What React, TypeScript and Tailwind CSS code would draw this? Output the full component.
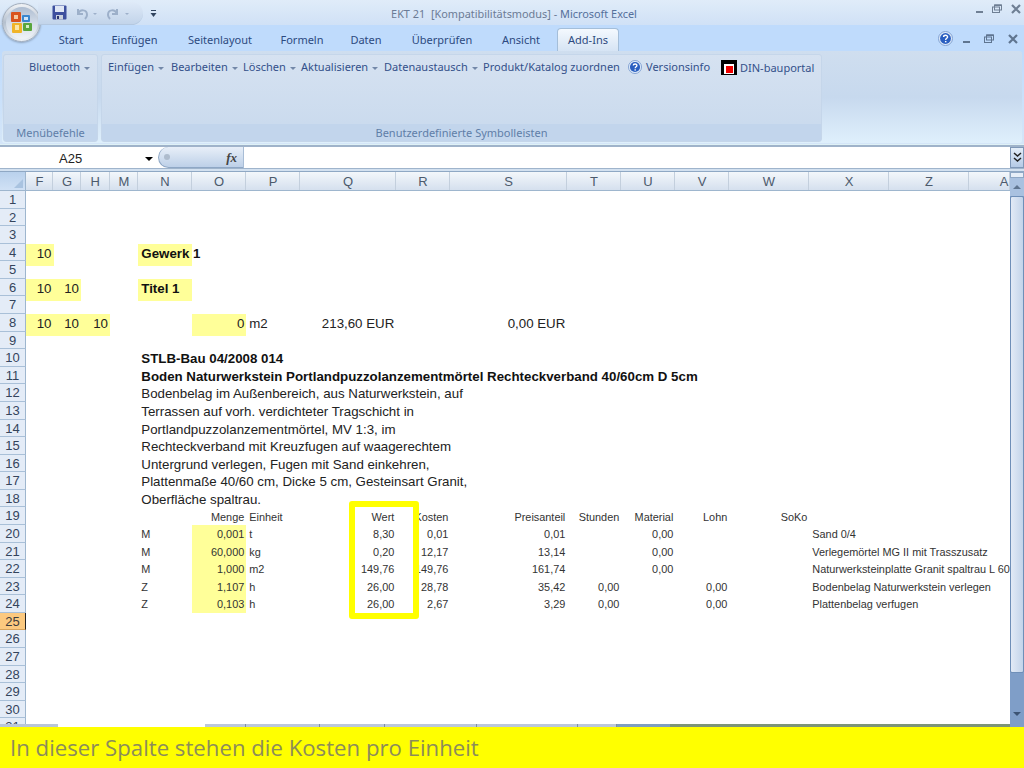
const columns = ['F', 'G', 'H', 'M', 'N', 'O', 'P', 'Q', 'R', 'S', 'T', 'U', 'V', 'W', 'X', 'Z', 'A'] as const

const gridCols = 'grid grid-cols-[27.5px_27.5px_29px_28.3px_54px_54px_54px_96px_54px_117px_54px_54px_54px_80px_80px_80px_41px]'

type Cell = { t?: string; right?: boolean; bg?: boolean; kind?: 'big' | 'bold' | 'small' }

const big = (t: string): Cell => ({ t, kind: 'big' })
const bold = (t: string): Cell => ({ t, kind: 'bold' })
const sm = (t: string): Cell => ({ t, kind: 'small' })
const smr = (t: string): Cell => ({ t, kind: 'small', right: true })

const rows: Record<number, Record<string, Cell>> = {
  4: { F: { t: '10', right: true, bg: true, kind: 'big' }, N: { t: 'Gewerk 1', bg: true, kind: 'bold' } },
  6: {
    F: { t: '10', right: true, bg: true, kind: 'big' },
    G: { t: '10', right: true, bg: true, kind: 'big' },
    N: { t: 'Titel 1', bg: true, kind: 'bold' },
  },
  8: {
    F: { t: '10', right: true, bg: true, kind: 'big' },
    G: { t: '10', right: true, bg: true, kind: 'big' },
    H: { t: '10', right: true, bg: true, kind: 'big' },
    O: { t: '0', right: true, bg: true, kind: 'big' },
    P: big('m2'),
    Q: { t: '213,60 EUR', right: true, kind: 'big' },
    S: { t: '0,00 EUR', right: true, kind: 'big' },
  },
  10: { N: bold('STLB-Bau 04/2008 014') },
  11: { N: bold('Boden Naturwerkstein Portlandpuzzolanzementmörtel Rechteckverband 40/60cm D 5cm') },
  12: { N: big('Bodenbelag im Außenbereich, aus Naturwerkstein, auf') },
  13: { N: big('Terrassen auf vorh. verdichteter Tragschicht in') },
  14: { N: big('Portlandpuzzolanzementmörtel, MV 1:3, im') },
  15: { N: big('Rechteckverband mit Kreuzfugen auf waagerechtem') },
  16: { N: big('Untergrund verlegen, Fugen mit Sand einkehren,') },
  17: { N: big('Plattenmaße 40/60 cm, Dicke 5 cm, Gesteinsart Granit,') },
  18: { N: big('Oberfläche spaltrau.') },
  19: {
    O: smr('Menge'), P: sm('Einheit'), Q: smr('Wert'), R: smr('Kosten'), S: smr('Preisanteil'),
    T: smr('Stunden'), U: smr('Material'), V: smr('Lohn'), W: smr('SoKo'),
  },
  20: {
    N: sm('M'), O: { t: '0,001', right: true, bg: true, kind: 'small' }, P: sm('t'), Q: smr('8,30'), R: smr('0,01'),
    S: smr('0,01'), U: smr('0,00'), X: sm('Sand 0/4'),
  },
  21: {
    N: sm('M'), O: { t: '60,000', right: true, bg: true, kind: 'small' }, P: sm('kg'), Q: smr('0,20'), R: smr('12,17'),
    S: smr('13,14'), U: smr('0,00'), X: sm('Verlegemörtel MG II mit Trasszusatz'),
  },
  22: {
    N: sm('M'), O: { t: '1,000', right: true, bg: true, kind: 'small' }, P: sm('m2'), Q: smr('149,76'), R: smr('149,76'),
    S: smr('161,74'), U: smr('0,00'), X: sm('Naturwerksteinplatte Granit spaltrau L 60'),
  },
  23: {
    N: sm('Z'), O: { t: '1,107', right: true, bg: true, kind: 'small' }, P: sm('h'), Q: smr('26,00'), R: smr('28,78'),
    S: smr('35,42'), T: smr('0,00'), V: smr('0,00'), X: sm('Bodenbelag Naturwerkstein verlegen'),
  },
  24: {
    N: sm('Z'), O: { t: '0,103', right: true, bg: true, kind: 'small' }, P: sm('h'), Q: smr('26,00'), R: smr('2,67'),
    S: smr('3,29'), T: smr('0,00'), V: smr('0,00'), X: sm('Plattenbelag verfugen'),
  },
}

const tabs = [
  ['Start', 'w-[58px]'], ['Einfügen', 'w-[69px]'], ['Seitenlayout', 'w-[102px]'], ['Formeln', 'w-[62px]'],
  ['Daten', 'w-[66px]'], ['Überprüfen', 'w-[86px]'], ['Ansicht', 'w-[72px]'],
]

const menus = [
  ['Einfügen', 'w-[63px]', true], ['Bearbeiten', 'w-[72px]', true], ['Löschen', 'w-[58px]', true],
  ['Aktualisieren', 'w-[83px]', true], ['Datenaustausch', 'w-[99px]', true], ['Produkt/Katalog zuordnen', 'w-[145px]', false],
] as const

const sheetTabs = ['w-[41px]', 'w-[74px]', 'w-[65px]', 'w-[92px]', 'w-[101px]', 'w-[39px]']

function Caret() {
  return <span className="ml-[4px] inline-block border-x-[3px] border-t-[3px] border-x-transparent border-t-[#7388a8] align-middle" />
}

function HelpIcon({ size }: { size: number }) {
  return (
    <svg width={size} height={size} viewBox="0 0 16 16">
      <circle cx="8" cy="8" r="7.5" fill="#dbe8f8" stroke="#7f9fd0" />
      <circle cx="8" cy="8" r="5.8" fill="#2a5fc0" />
      <path d="M6 6.4c0-2.4 4.2-2.4 4.2-.1 0 1.5-2 1.5-2 3.2" fill="none" stroke="#fff" strokeWidth="1.5" />
      <rect x="7.4" y="10.6" width="1.6" height="1.5" fill="#fff" />
    </svg>
  )
}

function WindowButtons({ color, gap }: { color: string; gap: string }) {
  return (
    <div className={'flex items-end ' + gap}>
      <svg width="7" height="10" viewBox="0 0 7 10">
        <rect x="0" y="7" width="7" height="2" fill={color} />
      </svg>
      <svg width="10" height="10" viewBox="0 0 10 10">
        <rect x="0.5" y="3" width="7" height="5.5" fill="none" stroke={color} />
        <rect x="2.5" y="1" width="7" height="5" fill="none" stroke={color} />
        <rect x="2.5" y="0.5" width="7" height="1.5" fill={color} />
      </svg>
      <svg width="10" height="10" viewBox="0 0 10 10">
        <path d="M1 1l8 8M9 1L1 9" stroke={color} strokeWidth="2.2" />
      </svg>
    </div>
  )
}

function OfficeButton() {
  return (
    <div className="absolute left-[2px] top-[3px] flex h-[39px] w-[39px] items-center justify-center rounded-full border border-[#a3aebc] bg-linear-to-b from-[#f1f3f6] via-[#b5c0ce] to-[#eef3f8] shadow-[0_1px_2px_#8ea4bf]">
      <div className="flex h-[32px] w-[32px] items-center justify-center rounded-full bg-linear-to-b from-[#aebdd1] via-[#d3dce8] to-[#f0f3f7]">
        <svg width="25" height="25" viewBox="0 0 25 25">
          <rect x="2" y="2" width="10" height="10" rx="1" fill="#d9541e" />
          <rect x="5" y="5" width="4" height="4" fill="#f4c9a0" />
          <rect x="13" y="5" width="8" height="7" rx="1" fill="#3a87cf" />
          <rect x="15" y="7" width="4" height="3" fill="#cfe4f6" />
          <rect x="3" y="13" width="10" height="10" rx="1" fill="#f0b429" />
          <rect x="6" y="15" width="4" height="5" fill="#fbe6a8" />
          <rect x="14" y="13" width="9" height="8" rx="1" fill="#5aa63c" />
          <rect x="17" y="15" width="3" height="3" fill="#d5ecc4" />
        </svg>
      </div>
    </div>
  )
}

function QuickAccess() {
  return (
    <div className="absolute left-[38px] top-[2px] flex h-[23px] w-[105px] items-center gap-[7px] rounded-r-full border-b border-[#b4c8e0] bg-linear-to-b from-[#dfeaf8] to-[#c2d4ea] pl-[14px]">
      <svg className="-mt-[2px] shrink-0" width="15" height="15" viewBox="0 0 15 15">
        <rect x="0.5" y="0.5" width="14" height="14" rx="1" fill="#3d4f9e" />
        <rect x="3" y="1" width="9" height="6" fill="#dfe6f5" />
        <rect x="4" y="10" width="7" height="4.5" fill="#c9d0dc" />
        <rect x="5" y="11" width="2" height="3" fill="#2b3570" />
      </svg>
      <svg className="shrink-0" width="25" height="13" viewBox="0 0 25 13">
        <path d="M4 2v5h5M4 7c2-5 9-5 9 1 0 2-1 3-2 4" fill="none" stroke="#9db0ca" strokeWidth="2" />
        <path d="M19 6h4l-2 2z" fill="#9db0ca" />
      </svg>
      <svg className="shrink-0" width="25" height="13" viewBox="0 0 25 13">
        <path d="M11 2v5H6M11 7C9 2 2 2 2 8c0 2 1 3 2 4" fill="none" stroke="#9db0ca" strokeWidth="2" />
        <path d="M19 6h4l-2 2z" fill="#9db0ca" />
      </svg>
      <svg className="absolute left-[112px] top-[7px]" width="7" height="9" viewBox="0 0 7 9">
        <rect x="1" y="1" width="5" height="1" fill="#30445f" />
        <path d="M0.5 4h6L3.5 8z" fill="#30445f" />
      </svg>
    </div>
  )
}

function Ribbon() {
  return (
    <div className="flex h-[96px] flex-col bg-linear-to-b from-[#bfdbfc] to-[#d5e6f8]">
      <div className="mx-[2px] flex h-[92px] rounded-[3px] bg-linear-to-b from-[#cfdeef] via-[#c7d9ee] to-[#dff0fc] pl-px pt-[3px]">
        <div className="mr-[3px] flex h-[88px] w-[95px] flex-col overflow-hidden rounded-[3px] border border-[#c5d6ea] bg-linear-to-b from-[#d6e2f1] to-[#c8d9ed]">
          <div className="flex-1 pl-[25px] pt-[5px] text-[11px] leading-[14px] text-[#33508a]">
            Bluetooth<Caret />
          </div>
          <div className="h-[17px] bg-[#c2d5ec] text-center text-[11px] leading-[18px] text-[#5f7ea8]">Menübefehle</div>
        </div>
        <div className="flex h-[88px] w-[721px] flex-col overflow-hidden rounded-[3px] border border-[#c5d6ea] bg-linear-to-b from-[#d6e2f1] to-[#c8d9ed]">
          <div className="flex flex-1 items-start pl-[6px] pt-[5px] text-[11px] leading-[14px] text-[#33508a]">
            {menus.map(([label, width, caret]) => (
              <span key={label} className={width + ' whitespace-nowrap'}>
                {label}
                {caret && <Caret />}
              </span>
            ))}
            <span className="flex w-[93px] items-center gap-[4px] whitespace-nowrap">
              <HelpIcon size={14} />
              Versionsinfo
            </span>
            <span className="flex items-center gap-[3px] whitespace-nowrap">
              <span className="flex h-[15px] w-[16px] items-end justify-center bg-black pb-[1px]">
                <span className="flex h-[10px] w-[10px] items-center justify-center bg-white">
                  <span className="h-[7px] w-[7px] bg-[#f00000]" />
                </span>
              </span>
              DIN-bauportal
            </span>
          </div>
          <div className="h-[17px] bg-[#c2d5ec] text-center text-[11px] leading-[18px] text-[#5f7ea8]">Benutzerdefinierte Symbolleisten</div>
        </div>
      </div>
      <div className="mt-[1px] h-[1px] bg-[#dff1f6]" />
      <div className="h-[2px] bg-[#9fb3ca]" />
    </div>
  )
}

function FormulaBar() {
  return (
    <div className="flex h-[25px] flex-col bg-[#d3e1f0]">
      <div className="flex h-[21px] items-center bg-white">
        <div className="relative flex h-full w-[158px] items-center pt-[2px] font-['Liberation_Sans',sans-serif] text-[13px] text-[#222]">
          <span className="ml-[59px]">A25</span>
          <span className="absolute left-[145px] top-[10px] border-x-[4px] border-t-[4px] border-x-transparent border-t-black" />
        </div>
        <div className="flex h-[21px] w-[85px] items-center justify-between rounded-l-full border-b border-l border-[#8ea7c5] bg-linear-to-b from-[#e8eff8] to-[#bdd0e8] pl-[5px] pr-[6px]">
          <span className="h-[6px] w-[6px] rounded-full bg-[#aebccd]" />
          <span className="font-['Liberation_Serif',serif] text-[13px] font-bold italic leading-none text-[#444]">fx</span>
        </div>
        <div className="h-full flex-1 border-l border-[#a8bdd6]" />
        <div className="flex h-[21px] w-[14px] items-center justify-center border border-[#7f98b8] bg-linear-to-b from-[#e4eef9] to-[#b4cae6]">
          <svg width="9" height="11" viewBox="0 0 9 11">
            <path d="M1 1l3.5 3L8 1M1 6l3.5 3L8 6" fill="none" stroke="#222" strokeWidth="1.5" />
          </svg>
        </div>
      </div>
      <div className="h-[1px] bg-[#9fb4cc]" />
      <div className="flex-1" />
      <div className="h-[1px] bg-[#8fa8c4]" />
    </div>
  )
}

function ColumnHeaders() {
  return (
    <div className="flex h-[19px] border-b border-[#9eb6ce]">
      <div className="flex h-full w-[26px] items-end justify-end border-r border-[#9eb6ce] bg-linear-to-b from-[#b9d1ec] to-[#d0e1f5] pb-[2px] pr-[2px]">
        <span className="border-b-[9px] border-l-[9px] border-b-[#a9c3e0] border-l-transparent" />
      </div>
      <div className={gridCols + ' flex-1'}>
        {columns.map((name) => (
          <div
            key={name}
            className={
              'overflow-hidden border-r border-[#c3cfdd] bg-linear-to-b from-[#f3f7fb] to-[#d5e0ee] text-center text-[13px] leading-[19px] text-[#4c5a6c] ' +
              (name === 'A' ? 'pl-[30px]' : 'pl-[1px]')
            }
          >
            {name}
          </div>
        ))}
      </div>
    </div>
  )
}

function SheetRow({ n }: { n: number }) {
  const row = rows[n] ?? {}
  const active = n === 25
  return (
    <div className="flex h-[17.58px]">
      <div
        className={
          'w-[26px] shrink-0 border-b border-r text-center text-[13px] leading-[17px] ' +
          (active
            ? 'border-b-[#d7a35c] border-r-[#222] bg-[#fcc97f] text-[#3c3c3c]'
            : 'border-b-[#a9c0d8] border-r-[#9eb6ce] bg-[#e4ecf7] text-[#34445c]')
        }
      >
        {n}
      </div>
      <div className={gridCols + ' flex-1'}>
        {columns.map((name) => {
          const c = row[name]
          if (!c) return <div key={name} />
          const font =
            c.kind === 'small'
              ? 'pt-[1px] text-[10.9px] text-[#333]'
              : c.kind === 'bold'
                ? 'pb-[2px] text-[13.3px] font-bold text-[#111]'
                : 'pb-[2px] text-[13.3px] text-[#222]'
          return (
            <div
              key={name}
              className={
                'flex items-center whitespace-nowrap pl-[3px] pr-[2px] ' + font + ' ' +
                (c.right ? 'justify-end ' : 'justify-start ') +
                (c.bg ? 'bg-[#ffff99]' : '')
              }
            >
              {c.t}
            </div>
          )
        })}
      </div>
    </div>
  )
}

function Scrollbar() {
  return (
    <div className="flex w-[14px] shrink-0 flex-col bg-[#7f9ec8]">
      <div className="h-[6px] border border-[#8ea7c5] bg-[#e6eef8]" />
      <div className="flex h-[18px] items-center justify-center bg-[#a9c1e0]">
        <span className="border-x-[4px] border-b-[4px] border-x-transparent border-b-[#5f7590]" />
      </div>
      <div className="h-[477px] rounded-[2px] border border-[#6f8fb8] bg-linear-to-r from-[#e2eaf6] to-[#c3d4ea]" />
      <div className="flex-1" />
      <div className="mb-[6px] flex h-[14px] items-center justify-center">
        <span className="border-x-[4px] border-t-[4px] border-x-transparent border-t-[#3c5474]" />
      </div>
    </div>
  )
}

function SheetTabStrip() {
  return (
    <div className="absolute bottom-[41px] left-0 flex h-[3px] w-[1010px]">
      <div className="w-[58px] bg-[#b9c6d8]" />
      <div className="w-[147px] bg-white" />
      {sheetTabs.map((width, i) => (
        <div key={i} className={width + ' border-r border-[#7f8fa5] bg-[#bcc8da]'} />
      ))}
      <div className="w-[53px] bg-[#7f9ec0]" />
      <div className="flex-1 bg-[#7d9478]" />
    </div>
  )
}

export default function App() {
  const rowNums = Array.from({ length: 31 }, (_, i) => i + 1)
  return (
    <div className="relative flex h-[768px] w-[1024px] flex-col overflow-hidden bg-white font-['Noto_Sans',sans-serif]">
      <div className="relative flex h-[25px] items-center justify-center bg-linear-to-b from-[#e0ecf9] to-[#d0e1f6] pt-[3px] text-[10.9px] text-[#6b7b95]">
        <span className="ml-[4px] whitespace-pre">
          EKT 21  [Kompatibilitätsmodus] - <span className="text-[#55709b]">Microsoft Excel</span>
        </span>
        <div className="absolute right-[3px] top-[4px]">
          <WindowButtons color="#6f7f94" gap="gap-[9px]" />
        </div>
      </div>

      <div className="flex h-[26px] items-end bg-[#bfdbfc] pl-[42px] text-[11px] text-[#2d4a80]">
        {tabs.map(([label, width]) => (
          <div key={label} className={width + ' pb-[3px] text-center leading-[16px]'}>
            {label}
          </div>
        ))}
        <div className="h-[23px] w-[62px] rounded-t-[4px] border border-b-0 border-[#a4bed9] bg-linear-to-b from-[#f4f9fe] to-[#d6e4f4] pt-[3px] text-center leading-[16px]">
          Add-Ins
        </div>
        <div className="ml-auto flex items-center gap-[10px] pb-[5px] pr-[6px]">
          <HelpIcon size={15} />
          <WindowButtons color="#5f7590" gap="gap-[14px]" />
        </div>
      </div>

      <Ribbon />
      <FormulaBar />

      <div className="flex min-h-0 flex-1 overflow-hidden">
        <div className="flex min-w-0 flex-1 flex-col overflow-hidden font-['Liberation_Sans',sans-serif]">
          <ColumnHeaders />
          {rowNums.map((n) => (
            <SheetRow key={n} n={n} />
          ))}
        </div>
        <Scrollbar />
      </div>

      <div className="flex h-[41px] shrink-0 items-center bg-[#ffff00] pl-[10px] font-['Open_Sans',sans-serif] text-[22.2px] text-[#8c8c5a]">
        In dieser Spalte stehen die Kosten pro Einheit
      </div>

      <OfficeButton />
      <QuickAccess />
      <SheetTabStrip />

      {/* gelber Rahmen um die Spalte Wert */}
      <div className="absolute left-[349px] top-[501px] h-[118px] w-[70px] rounded-[3px] border-[6px] border-[#ffff00]" />
    </div>
  )
}
